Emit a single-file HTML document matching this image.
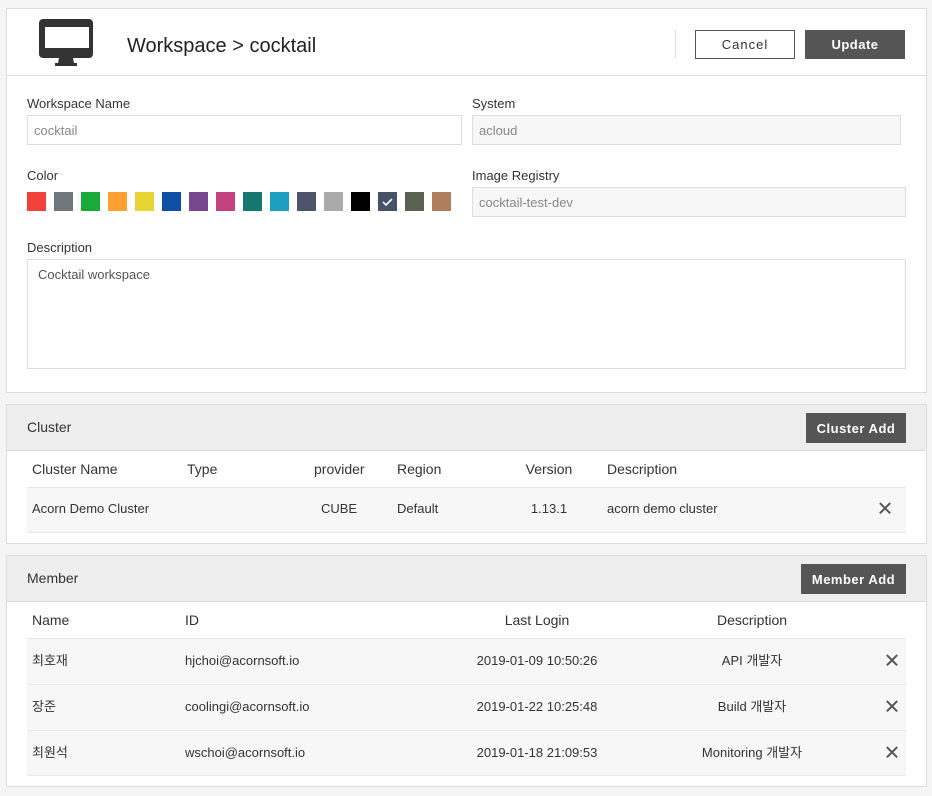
<!DOCTYPE html>
<html><head><meta charset="utf-8"><style>
*{box-sizing:border-box;margin:0;padding:0}
body{width:932px;height:796px;background:#f5f5f5;font-family:"Liberation Sans","Noto Sans CJK KR",sans-serif;color:#333;position:relative;overflow:hidden}
.a{position:absolute}
.panel{position:absolute;left:6px;width:921px;background:#fff;border:1px solid #ddd}
.lbl{position:absolute;font-size:13px;color:#333;line-height:16px}
.inp{position:absolute;border:1px solid #ddd;font-size:13px;color:#888;padding-left:6px;display:flex;align-items:center}
.sw{position:absolute;top:192px;width:19px;height:19px}
.btn{position:absolute;display:flex;align-items:center;justify-content:center;font-size:13px;font-weight:bold;letter-spacing:.5px;color:#fff;background:#555}
.hd{position:absolute;left:0;right:0;top:0;height:46px;background:#eee;border-bottom:1px solid #ddd}
.t{position:absolute;font-size:13px;line-height:16px;transform:translateY(-50%)}
.c{transform:translate(-50%,-50%)}
.row{position:absolute;left:20px;width:879px;height:46px;background:#f7f7f7;border-top:1px solid #e8e8e8}
.x{position:absolute;font-size:20px;color:#555;transform:translate(-50%,-50%)}
</style></head><body>
<div class="panel" style="top:8px;height:385px"></div>
<div class="a" style="left:7px;top:75px;width:919px;height:1px;background:#ddd"></div>
<svg class="a" style="left:39px;top:19px" width="54" height="48" viewBox="0 0 54 48"><rect x="0" y="0" width="54" height="39" rx="4" fill="#333"/><rect x="6" y="8" width="44" height="21" fill="#fff"/><path d="M20 39h14l1 5h3v3H16v-3h3z" fill="#333"/></svg>
<div class="a" style="left:127px;top:34px;font-size:20px;line-height:24px;color:#222">Workspace &gt; cocktail</div>
<div class="a" style="left:675px;top:30px;width:1px;height:28px;background:#ddd"></div>
<div class="btn" style="left:695px;top:30px;width:100px;height:29px;background:#fff;border:1px solid #555;color:#333;font-weight:normal;letter-spacing:1px">Cancel</div>
<div class="btn" style="left:805px;top:30px;width:100px;height:29px">Update</div>

<div class="lbl" style="left:27px;top:96px">Workspace Name</div>
<div class="inp" style="left:27px;top:115px;width:435px;height:30px">cocktail</div>
<div class="lbl" style="left:472px;top:96px">System</div>
<div class="inp" style="left:472px;top:115px;width:429px;height:30px;background:#f7f7f7">acloud</div>
<div class="lbl" style="left:27px;top:168px">Color</div>
<div class="sw" style="left:27px;background:#f2403a"></div>
<div class="sw" style="left:54px;background:#6f767d"></div>
<div class="sw" style="left:81px;background:#1aaa3a"></div>
<div class="sw" style="left:108px;background:#ff9f30"></div>
<div class="sw" style="left:135px;background:#e8d432"></div>
<div class="sw" style="left:162px;background:#0f4ea5"></div>
<div class="sw" style="left:189px;background:#77488d"></div>
<div class="sw" style="left:216px;background:#c3427d"></div>
<div class="sw" style="left:243px;background:#127870"></div>
<div class="sw" style="left:270px;background:#1d9fc2"></div>
<div class="sw" style="left:297px;background:#4e546a"></div>
<div class="sw" style="left:324px;background:#aaaaaa"></div>
<div class="sw" style="left:351px;background:#000"></div>
<div class="sw" style="left:378px;background:#465366"><svg width="19" height="19"><path d="M5 10l3 3 6-6" stroke="#fff" stroke-width="1.6" fill="none"/></svg></div>
<div class="sw" style="left:405px;background:#5b6150"></div>
<div class="sw" style="left:432px;background:#b07e5b"></div>
<div class="lbl" style="left:472px;top:168px">Image Registry</div>
<div class="inp" style="left:472px;top:187px;width:434px;height:30px;background:#f7f7f7">cocktail-test-dev</div>
<div class="lbl" style="left:27px;top:240px">Description</div>
<div class="inp" style="left:27px;top:259px;width:879px;height:110px;align-items:flex-start;padding:7px 10px;color:#555">Cocktail workspace</div>

<div class="panel" style="top:404px;height:140px">
<div class="hd"></div>
<div class="t" style="left:20px;top:22px;font-size:14px">Cluster</div>
<div class="btn" style="left:799px;top:8px;width:100px;height:30px">Cluster Add</div>
<div class="t" style="left:25px;top:64px;font-size:14px">Cluster Name</div>
<div class="t" style="left:180px;top:64px;font-size:14px">Type</div>
<div class="t" style="left:307px;top:64px;font-size:14px">provider</div>
<div class="t" style="left:390px;top:64px;font-size:14px">Region</div>
<div class="t c" style="left:542px;top:64px;font-size:14px">Version</div>
<div class="t" style="left:600px;top:64px;font-size:14px">Description</div>
<div class="row" style="top:82px;border-bottom:1px solid #e8e8e8"></div>
<div class="t" style="left:25px;top:104px">Acorn Demo Cluster</div>
<div class="t c" style="left:332px;top:104px">CUBE</div>
<div class="t" style="left:390px;top:104px">Default</div>
<div class="t c" style="left:542px;top:104px">1.13.1</div>
<div class="t" style="left:600px;top:104px">acorn demo cluster</div>
<div class="x" style="left:878px;top:104px">✕</div>
</div>

<div class="panel" style="top:555px;height:232px">
<div class="hd"></div>
<div class="t" style="left:20px;top:22px;font-size:14px">Member</div>
<div class="btn" style="left:794px;top:8px;width:105px;height:30px">Member Add</div>
<div class="t" style="left:25px;top:64px;font-size:14px">Name</div>
<div class="t" style="left:178px;top:64px;font-size:14px">ID</div>
<div class="t c" style="left:530px;top:64px;font-size:14px">Last Login</div>
<div class="t c" style="left:745px;top:64px;font-size:14px">Description</div>
<div class="row" style="top:82px"></div>
<div class="row" style="top:128px"></div>
<div class="row" style="top:174px;border-bottom:1px solid #e8e8e8"></div>
<div class="t" style="left:25px;top:105px">최호재</div>
<div class="t" style="left:178px;top:105px">hjchoi@acornsoft.io</div>
<div class="t c" style="left:530px;top:105px">2019-01-09 10:50:26</div>
<div class="t c" style="left:745px;top:105px">API 개발자</div>
<div class="x" style="left:885px;top:105px">✕</div>
<div class="t" style="left:25px;top:151px">장준</div>
<div class="t" style="left:178px;top:151px">coolingi@acornsoft.io</div>
<div class="t c" style="left:530px;top:151px">2019-01-22 10:25:48</div>
<div class="t c" style="left:745px;top:151px">Build 개발자</div>
<div class="x" style="left:885px;top:151px">✕</div>
<div class="t" style="left:25px;top:197px">최원석</div>
<div class="t" style="left:178px;top:197px">wschoi@acornsoft.io</div>
<div class="t c" style="left:530px;top:197px">2019-01-18 21:09:53</div>
<div class="t c" style="left:745px;top:197px">Monitoring 개발자</div>
<div class="x" style="left:885px;top:197px">✕</div>
</div>
</body></html>
